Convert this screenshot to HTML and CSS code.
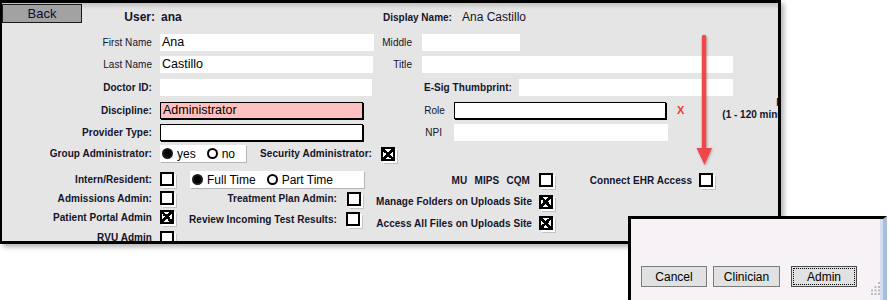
FILE: index.html
```html
<!DOCTYPE html>
<html lang="en">
<head>
    <meta charset="UTF-8">
    <title>User Setup</title>
    <link rel="stylesheet" href="styles.css">
</head>
<body>
    <div class="panel">
        <div class="header">
            <button class="back-btn">Back</button>
            <span class="user-lbl">User:</span>
            <span class="user-val">ana</span>
            <span class="disp-lbl">Display Name:</span>
            <span class="disp-val">Ana Castillo</span>
        </div>

        <div class="form">
            <div class="row">
                <span class="lbl main plain">First Name</span>
                <span class="field in-first">Ana</span>
                <span class="lbl lb-middle plain">Middle</span>
                <span class="field in-middle"></span>
            </div>
            <div class="row">
                <span class="lbl main plain">Last Name</span>
                <span class="field in-last">Castillo</span>
                <span class="lbl lb-title plain">Title</span>
                <span class="field in-title"></span>
            </div>
            <div class="row">
                <span class="lbl main">Doctor ID:</span>
                <span class="field in-doctor"></span>
                <span class="lbl lb-esig">E-Sig Thumbprint:</span>
                <span class="field in-esig"></span>
            </div>
            <div class="row">
                <span class="lbl main">Discipline:</span>
                <span class="field boxed pink in-disc">Administrator</span>
                <span class="lbl lb-role plain">Role</span>
                <span class="field boxed in-role"></span>
                <span class="clear-x">X</span>
                <div class="timeout-note">
                    <div class="note-first">Inactivity Timeout</div>
                    <div>(1 - 120 minutes)</div>
                </div>
            </div>
            <div class="row">
                <span class="lbl main">Provider Type:</span>
                <span class="field boxed in-disc"></span>
                <span class="lbl lb-npi plain">NPI</span>
                <span class="field in-npi"></span>
            </div>
            <div class="row">
                <span class="lbl main">Group Administrator:</span>
                <div class="radios yesno">
                    <span class="opt"><span class="rb on"></span>yes</span>
                    <span class="opt"><span class="rb"></span>no</span>
                </div>
                <span class="lbl lb-security">Security Administrator:</span>
                <span class="cb checked mt2"></span>
            </div>
            <div class="row">
                <span class="lbl main">Intern/Resident:</span>
                <span class="cb mt1"></span>
                <div class="radios worktime">
                    <span class="opt"><span class="rb on"></span>Full Time</span>
                    <span class="opt"><span class="rb"></span>Part Time</span>
                </div>
                <span class="lbl lb-mu mt2">MU MIPS CQM</span>
                <span class="cb mt2"></span>
                <span class="lbl lb-ehr mt2">Connect EHR Access</span>
                <span class="cb mt2"></span>
            </div>
            <div class="row row-small">
                <span class="lbl main">Admissions Admin:</span>
                <span class="cb"></span>
                <span class="lbl lb-treat">Treatment Plan Admin:</span>
                <span class="cb mt1"></span>
                <span class="lbl lb-folders mt4">Manage Folders on Uploads Site</span>
                <span class="cb checked mt4"></span>
            </div>
            <div class="row row-small">
                <span class="lbl main">Patient Portal Admin</span>
                <span class="cb checked"></span>
                <span class="lbl lb-review mt2">Review Incoming Test Results:</span>
                <span class="cb mt2"></span>
                <span class="lbl lb-files mt6">Access All Files on Uploads Site</span>
                <span class="cb checked mt6"></span>
            </div>
            <div class="row row-last">
                <span class="lbl main">RVU Admin</span>
                <span class="cb mt1"></span>
            </div>
        </div>

        <svg class="arrow" width="30" height="140" viewBox="0 0 30 140">
            <line x1="14" y1="6" x2="14" y2="120" stroke="#f04848" stroke-width="4.5" stroke-linecap="round"/>
            <polygon points="6.5,117 22,117 14.5,134" fill="#f04848"/>
        </svg>
    </div>

    <div class="dialog">
        <div class="dialog-buttons">
            <button class="dlg-btn">Cancel</button>
            <button class="dlg-btn clinician">Clinician</button>
            <button class="dlg-btn admin">Admin</button>
        </div>
        <svg class="grip" width="12" height="14" viewBox="0 0 12 14">
            <rect x="9" y="0" width="2" height="2" fill="#b9b9b9"/>
            <rect x="5.5" y="4" width="2" height="2" fill="#b9b9b9"/>
            <rect x="9" y="4" width="2" height="2" fill="#b9b9b9"/>
            <rect x="2" y="7.5" width="2" height="2" fill="#b9b9b9"/>
            <rect x="5.5" y="7.5" width="2" height="2" fill="#b9b9b9"/>
            <rect x="9" y="7.5" width="2" height="2" fill="#b9b9b9"/>
            <rect x="2" y="11" width="2" height="2" fill="#b9b9b9"/>
            <rect x="5.5" y="11" width="2" height="2" fill="#b9b9b9"/>
            <rect x="9" y="11" width="2" height="2" fill="#b9b9b9"/>
        </svg>
    </div>
</body>
</html>
```

FILE: styles.css
```css
body {
    margin: 0;
    width: 890px;
    height: 300px;
    overflow: hidden;
    position: relative;
    background: #fff;
    font-family: 'Liberation Sans', Arial, sans-serif;
    color: #14142a;
}

.panel {
    position: relative;
    box-sizing: border-box;
    width: 781px;
    height: 244px;
    border: 3px solid #000;
    border-left-width: 2px;
    background: #e5e5e5;
    box-shadow: 3px 3px 5px rgba(0,0,0,0.3), inset 0 6px 4px -3px rgba(0,0,0,0.16);
    overflow: hidden;
}

/* header line */
.header {
    display: flex;
    align-items: flex-start;
    height: 31px;
}

.back-btn {
    margin: 1px 0 0 0;
    width: 80px;
    height: 19px;
    padding: 0;
    background: #a2a2a2;
    border: 1px solid #1a1a1a;
    font-family: inherit;
    font-size: 13px;
    line-height: 17px;
    color: #0c0c38;
}

.user-lbl {
    width: 73px;
    text-align: right;
    margin-top: 7px;
    font-size: 12px;
    font-weight: bold;
    line-height: 14px;
}

.user-val {
    width: 222px;
    margin-left: 6px;
    margin-top: 7px;
    font-size: 12px;
    font-weight: bold;
    line-height: 14px;
}

.disp-lbl {
    width: 79px;
    margin-top: 9px;
    font-size: 10px;
    font-weight: bold;
    line-height: 12px;
}

.disp-val {
    margin-top: 7px;
    font-size: 12px;
    line-height: 14px;
}

/* form grid */
.form {
    display: grid;
    grid-template-rows: 22px 23px 23px 22px 21px 26px 20px 19px 20px 20px;
}

.row {
    --lh: 17px;
    display: flex;
    align-items: flex-start;
    white-space: nowrap;
}

.row-small {
    --lh: 15px;
}

.row-last {
    --lh: 16px;
}

.row > * {
    flex-shrink: 0;
}

.lbl {
    box-sizing: border-box;
    text-align: right;
    font-size: 10px;
    font-weight: bold;
    line-height: var(--lh);
    letter-spacing: 0.05px;
}

.lbl.plain {
    font-weight: normal;
}

.lbl.main { width: 158px; padding-right: 8px; }
.lb-middle { width: 48px; padding-right: 10px; }
.lb-title { width: 49px; padding-right: 10px; }
.lb-esig { width: 147px; padding-right: 7px; }
.lb-role { width: 91px; padding-right: 9px; }
.lb-npi { width: 91px; padding-right: 12px; }
.lb-security { width: 135px; padding-right: 9px; }
.lb-mu { width: 175px; padding-right: 9px; word-spacing: 4.5px; --lh: 15px; }
.lb-ehr { width: 146px; padding-right: 7px; --lh: 15px; }
.lb-treat { width: 173px; padding-right: 10px; }
.lb-folders { width: 178px; padding-right: 7px; --lh: 14px; }
.lb-review { width: 172px; padding-right: 9px; }
.lb-files { width: 179px; padding-right: 7px; }

.mt1 { margin-top: 1px; }
.mt2 { margin-top: 2px; }
.mt4 { margin-top: 4px; }
.mt6 { margin-top: 6px; }

.field {
    box-sizing: border-box;
    height: 17px;
    padding-left: 2px;
    background: #fff;
    font-size: 12.5px;
    line-height: 17px;
    color: #000;
}

.field.boxed {
    border: 1px solid #000;
    box-shadow: 1px 1px 0 #000;
    line-height: 15px;
}

.field.pink {
    background: #ffc0c0;
}

.in-first { width: 214px; }
.in-middle { width: 98px; }
.in-last { width: 213px; }
.in-title { width: 311px; }
.in-doctor { width: 212px; }
.in-esig { width: 214px; }
.in-disc { width: 203px; }
.in-role { width: 212px; }
.in-npi { width: 214px; }

.clear-x {
    margin-left: 11px;
    color: #ea3b32;
    font-size: 11px;
    font-weight: bold;
    line-height: 17px;
}

.timeout-note {
    margin-left: 38px;
    margin-top: -5px;
    font-size: 10px;
    font-weight: bold;
    line-height: 12px;
}

.note-first {
    padding-left: 54px;
}

/* radio groups */
.radios {
    box-sizing: border-box;
    display: flex;
    align-items: center;
    height: 17px;
    padding-left: 2px;
    background: #fff;
    box-shadow: 1px 1px 0 #b4b4b4;
    font-size: 12px;
    color: #000;
}

.yesno { width: 86px; }
.worktime { width: 174px; margin-left: 16px; }

.opt {
    display: flex;
    align-items: center;
    gap: 4px;
}

.opt + .opt {
    margin-left: 11px;
}

.rb {
    box-sizing: border-box;
    width: 11px;
    height: 11px;
    border-radius: 50%;
    border: 2px solid #000;
    background: #fff;
}

.rb.on {
    background: #000;
    border-color: #1c1c1c;
}

/* checkboxes */
.cb {
    box-sizing: border-box;
    width: 14px;
    height: 14px;
    border: 2px solid #000;
    background: #fff;
    box-shadow: 2px 2px 0 #fff, 3px 3px 0 #c2c2c2;
}

.cb.checked {
    background:
        linear-gradient(45deg, transparent 40%, #000 40%, #000 60%, transparent 60%),
        linear-gradient(-45deg, transparent 40%, #000 40%, #000 60%, transparent 60%),
        #fff;
}

.arrow {
    position: absolute;
    left: 688px;
    top: 28px;
    filter: drop-shadow(1px 1px 1px rgba(0,0,0,0.25));
}

/* dialog */
.dialog {
    position: absolute;
    left: 628px;
    top: 216px;
    box-sizing: border-box;
    width: 259px;
    height: 90px;
    border-top: 3px solid #000;
    border-left: 3px solid #000;
    border-right: 4px solid #a9bdd8;
    background: #f6f2f6;
    box-shadow: inset -3px 0 0 #d2deef;
}

.dialog-buttons {
    display: flex;
    padding: 47px 0 0 10px;
}

.dlg-btn {
    box-sizing: border-box;
    width: 66px;
    height: 21px;
    padding: 0;
    background: #e1e1e1;
    border: 1px solid #7c7c7c;
    font-family: inherit;
    font-size: 12px;
    color: #000;
}

.clinician {
    width: 67px;
    margin-left: 6px;
}

.admin {
    margin-left: 11px;
    border-color: #4a4a4a;
    outline: 1px dotted #000;
    outline-offset: -3px;
}

.grip {
    position: absolute;
    left: 238px;
    top: 63px;
}
```
